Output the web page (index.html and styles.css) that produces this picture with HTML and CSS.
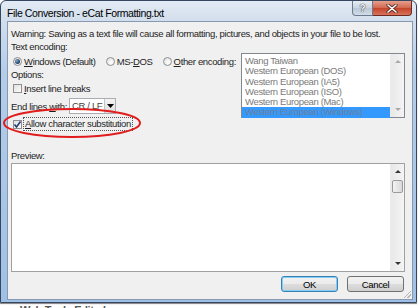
FILE: index.html
```html
<!doctype html>
<html lang="en">

<head>
  <meta charset="UTF-8" />
  <title>File Conversion - eCat Formatting.txt</title>
  <link rel="stylesheet" href="styles.css">
</head>

<body>
  <div class="window">
    <div class="titlebar">
      <span class="title">File Conversion - eCat Formatting.txt</span>
      <div class="caption-buttons">
        <span class="cap-btn help">?</span>
        <span class="cap-btn close">
          <svg width="12" height="9" viewBox="0 0 12 9">
            <path d="M2 1 L10 8 M10 1 L2 8" stroke="#5a2a22" stroke-width="3.2" stroke-linecap="round" />
            <path d="M2 1 L10 8 M10 1 L2 8" stroke="#fff" stroke-width="1.6" stroke-linecap="round" />
          </svg>
        </span>
      </div>
    </div>

    <div class="client">
      <p class="warning">Warning: Saving as a text file will cause all formatting, pictures, and objects in your file to be lost.</p>

      <div class="top">
        <div class="left">
          <div class="label">Text encoding:</div>
          <div class="radios">
            <span class="option"><span class="radio checked"></span><span><u>W</u>indows (Default)</span></span>
            <span class="option"><span class="radio"></span><span>MS-<u>D</u>OS</span></span>
            <span class="option"><span class="radio"></span><span><u>O</u>ther encoding:</span></span>
          </div>
          <div class="label">Options:</div>
          <div class="option check-row"><span class="check"></span><span><u>I</u>nsert line breaks</span></div>
          <div class="endlines">
            <span>End lines <u>w</u>ith:</span>
            <div class="combo">
              <span class="combo-text">CR / LF</span>
              <span class="combo-btn">
                <svg width="7" height="4" viewBox="0 0 7 4"><path d="M0 0 H7 L3.5 4 Z" fill="#000" /></svg>
              </span>
            </div>
          </div>
          <div class="option check-row allow">
            <span class="check">
              <svg width="9" height="9" viewBox="0 0 9 9"><path d="M1.5 4.5 L3.5 7 L7.5 1.5" fill="none" stroke="#1f3f73" stroke-width="1.6" /></svg>
            </span>
            <span class="focus"><u>A</u>llow character substitution</span>
          </div>
        </div>

        <div class="listbox">
          <ul class="items">
            <li>Wang Taiwan</li>
            <li>Western European (DOS)</li>
            <li>Western European (IA5)</li>
            <li>Western European (ISO)</li>
            <li>Western European (Mac)</li>
            <li class="selected">Western European (Windows)</li>
          </ul>
          <div class="scrollbar plain">
            <span class="arrow up"></span>
            <span class="arrow down"></span>
          </div>
        </div>
      </div>

      <div class="label preview-label">Preview:</div>
      <div class="preview">
        <div class="preview-area"></div>
        <div class="scrollbar">
          <span class="arrow up dark"></span>
          <span class="thumb"></span>
          <span class="arrow down dark"></span>
        </div>
      </div>

      <div class="buttons">
        <span class="btn default">OK</span>
        <span class="btn">Cancel</span>
      </div>

      <!-- red annotation ring drawn over the dialog -->
      <svg class="annotation" width="142" height="32" viewBox="0 0 142 32">
        <ellipse cx="70" cy="16" rx="68" ry="14" fill="none" stroke="#e11d1d" stroke-width="2" />
      </svg>
      <span class="grip"></span>
    </div>
  </div>
  <div class="behind">Web Tools Edited</div>
</body>

</html>
```

FILE: styles.css
```css
body {
  margin: 0;
  width: 420px;
  height: 308px;
  overflow: hidden;
  background-color: #fff;
  font-family: "Liberation Sans", Arial, sans-serif;
  font-size: 9.5px;
  letter-spacing: -0.35px;
  color: #1e1e1e;
}

.window {
  width: 417px;
  height: 303px;
  box-sizing: border-box;
  border: 1px solid #34475f;
  border-radius: 6px 6px 0 0;
  background: linear-gradient(to bottom, #e3ebf5 0, #d2deec 20px, #b4cde9 70px, #9fc0e6 100%);
  padding: 0 3px 2px 6px;
  display: flex;
  flex-direction: column;
  box-shadow: 0 1px 1px rgba(0, 0, 0, 0.5);
}

.titlebar {
  height: 20px;
  display: flex;
  align-items: flex-start;
}

.title {
  padding-top: 6px;
  font-size: 10.5px;
  letter-spacing: -0.4px;
  color: #000;
}

.caption-buttons {
  margin-left: auto;
  margin-right: 1px;
  display: flex;
}

.cap-btn {
  height: 15px;
  box-sizing: border-box;
  border: 1px solid #6b7a8f;
  border-top: none;
  display: flex;
  align-items: center;
  justify-content: center;
}

.help {
  width: 21px;
  border-radius: 0 0 0 4px;
  background: linear-gradient(to bottom, #e6ecf3, #c9d4e2 50%, #b9c6d6 51%, #d3dde9);
  color: #f4f6f9;
  font-weight: bold;
  font-size: 10px;
  text-shadow: 0 0 1px #333, 0 0 1px #333;
}

.close {
  width: 39px;
  border-left: none;
  border-color: #6d2a20;
  border-radius: 0 0 4px 0;
  background: linear-gradient(to bottom, #e6a08e, #d0664f 50%, #c4432b 51%, #d9725b);
}

.client {
  flex: 1;
  position: relative;
  border: 1px solid #8799b0;
  background-color: #f0f0f0;
  padding: 6px 7px 0 3px;
}

.warning {
  margin: 0;
  height: 12px;
  line-height: 12px;
  white-space: nowrap;
}

.top {
  display: grid;
  grid-template-columns: 230px 164px;
  height: 90px;
}

.label {
  height: 14px;
  line-height: 14px;
}

.radios {
  height: 14px;
  display: flex;
  align-items: center;
  gap: 10px;
  padding-left: 2px;
}

.option {
  display: flex;
  align-items: center;
  gap: 2px;
  white-space: nowrap;
}

.radio {
  width: 9px;
  height: 9px;
  box-sizing: border-box;
  border: 1px solid #8e8f8f;
  border-radius: 50%;
  background: radial-gradient(circle at 60% 65%, #fff, #dcdcdc);
  display: flex;
  align-items: center;
  justify-content: center;
}

.radio.checked::after {
  content: "";
  width: 5px;
  height: 5px;
  border-radius: 50%;
  background: radial-gradient(circle at 35% 35%, #7fa8cf, #1d3e5c 70%);
}

.check-row {
  height: 13px;
  padding-left: 2px;
}

.check {
  width: 9px;
  height: 9px;
  box-sizing: border-box;
  border: 1px solid #8f8f8f;
  background: linear-gradient(135deg, #e0e0e0, #fdfdfd);
  display: flex;
  align-items: center;
  justify-content: center;
}

.check svg {
  flex-shrink: 0;
}

.endlines {
  margin-top: 3px;
  height: 16px;
  display: flex;
  align-items: center;
  gap: 2px;
}

.combo {
  width: 47px;
  height: 16px;
  box-sizing: border-box;
  border: 1px solid #abadb3;
  background-color: #fff;
  display: flex;
}

.combo-text {
  flex: 1;
  padding-left: 2px;
  line-height: 14px;
  color: #444;
}

.combo-btn {
  width: 11px;
  box-sizing: border-box;
  border-left: 1px solid #c5c5c5;
  background: linear-gradient(to bottom, #f4f4f4, #dcdcdc);
  display: flex;
  align-items: center;
  justify-content: center;
}

.allow {
  margin-top: 3px;
  height: 14px;
}

.focus {
  border: 1px dotted #555;
  padding: 0 1px;
  line-height: 12px;
  margin-left: -1px;
}

.listbox {
  margin-top: 13px;
  height: 65px;
  box-sizing: border-box;
  border: 1px solid #828790;
  background-color: #fff;
  display: flex;
}

.items {
  flex: 1;
  margin: 0;
  padding: 2px 0 0;
  list-style: none;
  color: #7a7a7a;
}

.items li {
  height: 10.25px;
  line-height: 10.25px;
  padding-left: 3px;
  white-space: nowrap;
}

.items .selected {
  background-color: #3399ff;
  color: #6f7f95;
}

.scrollbar {
  width: 13px;
  background: linear-gradient(to right, #e8e8e8, #f4f4f4);
  border-left: 1px solid #ececec;
  display: flex;
  flex-direction: column;
  align-items: center;
  position: relative;
}

.arrow {
  width: 0;
  height: 0;
  border-left: 3px solid transparent;
  border-right: 3px solid transparent;
  margin: 6px 0;
}

.arrow.up {
  border-bottom: 3px solid #a9a9a9;
}

.arrow.down {
  border-top: 3px solid #a9a9a9;
  margin-top: auto;
}

.arrow.dark.up {
  border-bottom-color: #333;
}

.arrow.dark.down {
  border-top-color: #333;
}

.thumb {
  width: 11px;
  height: 13px;
  box-sizing: border-box;
  border: 1px solid #9b9b9b;
  border-radius: 2px;
  background: linear-gradient(to right, #f3f3f3, #dadada);
  margin-top: 1px;
}

.preview-label {
  margin-top: 19px;
  height: 13px;
  line-height: 13px;
}

.preview {
  margin-top: 1px;
  height: 109px;
  box-sizing: border-box;
  border: 1px solid #a0a0a0;
  background-color: #fff;
  display: flex;
}

.preview-area {
  flex: 1;
}

.buttons {
  margin-top: 4px;
  display: flex;
  justify-content: flex-end;
  gap: 9px;
  padding-right: 1px;
}

.btn {
  width: 57px;
  height: 16px;
  box-sizing: border-box;
  border: 1px solid #707070;
  border-radius: 3px;
  background: linear-gradient(to bottom, #f2f2f2, #ebebeb 50%, #dddddd 51%, #cfcfcf);
  display: flex;
  align-items: center;
  justify-content: center;
  color: #000;
}

.btn.default {
  border-color: #3c7fb1;
  box-shadow: inset 0 0 0 1px #7fd0f4;
}

.annotation {
  position: absolute;
  left: -6px;
  top: 85px;
  pointer-events: none;
}

.grip {
  position: absolute;
  right: 1px;
  bottom: 1px;
  width: 7px;
  height: 7px;
  background: linear-gradient(135deg, transparent 45%, #b5b5b5 45%, #b5b5b5 55%, transparent 55%, transparent 70%, #b5b5b5 70%, #b5b5b5 80%, transparent 80%);
}

.behind {
  margin: 2px 0 0 20px;
  font-weight: bold;
  font-size: 11px;
  line-height: 11px;
  color: #555;
}
```
